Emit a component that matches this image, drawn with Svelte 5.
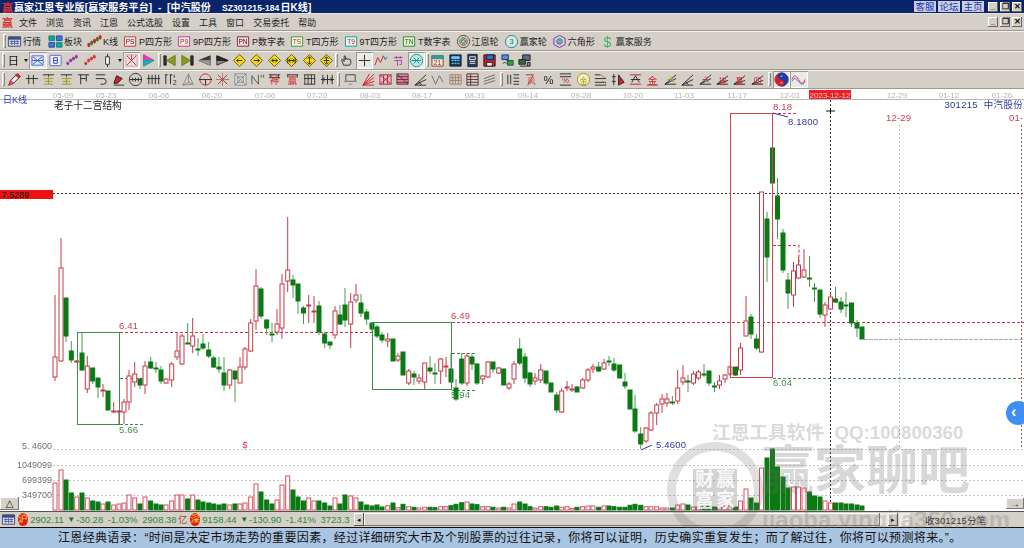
<script lang="ts">
	// x, high, body top, body bottom, low, 1 = green, volume top
	const candles = [
		[55,295,357,377,381,0,483],[61,238,268,361,362,0,470],[66,298,298,336,342,1,480],[71.3,341,351,360,363,1,493],
		[76.7,360,361,362,363,0,497],[82,333,353,370,371,1,493],[87.3,356,366,389,393,0,498],[92.7,368,368,381,384,1,501],
		[98,378,378,387,398,1,502],[103,384,390,391,397,0,504],[108,391,391,410,410,1,502],[113.7,402,411,412,413,0,505],
		[119,410,411,412,425,0,504],[124,399,402,412,424,0,503],[129,370,376,402,410,0,495],[134.7,362,374,382,387,0,498],
		[140,379,379,385,389,1,504],[145,361,366,385,394,0,497],[150.7,357,362,368,369,1,501],[156,362,368,369,373,1,504],
		[161,366,370,381,384,1,505],[166,378,379,383,384,0,505],[171.7,362,364,380,387,0,501],[177,332,351,357,360,0,495],
		[182,334,336,364,365,0,495],[187.7,323,343,344,344,1,499],[192.7,318,336,346,353,0,495],[198,338,349,350,356,1,500],
		[203,334,344,348,350,1,502],[208.7,342,350,356,358,1,503],[213.7,356,358,367,368,1,504],[219,357,367,369,373,1,505],
		[224,357,373,385,391,1,504],[229.7,369,370,385,389,0,505],[235,371,371,379,402,1,504],[240,357,367,383,383,0,504],
		[245,347,349,367,370,0,503],[250.7,319,323,351,352,0,497],[256,269,286,321,330,0,484],[261,287,289,316,319,1,492],
		[266.7,319,320,328,335,1,500],[272,323,334,335,342,1,504],[277,309,324,332,335,0,500],[282,274,284,328,339,0,485],
		[287.7,217,270,281,292,0,476],[293,275,280,285,298,1,490],[298,284,284,301,314,1,497],[303.5,306,308,313,324,1,501],
		[308.7,295,305,306,323,0,498],[314,296,311,312,323,0,501],[319,301,306,332,335,1,501],[324.7,332,334,343,348,1,503],
		[330,342,342,345,349,1,506],[335,306,311,335,339,0,498],[340,305,315,324,325,1,504],[345,288,305,320,327,1,495],
		[350.7,293,302,324,348,0,496],[356,284,295,300,303,0,498],[361,294,303,313,317,1,502],[366.7,309,312,319,325,1,505],
		[372,323,323,329,333,1,506],[377,325,327,336,338,1,505],[382,332,335,340,343,1,507],[387.7,333,339,341,347,0,505.7],
		[393,339,339,361,361,1,503],[398,353,356,360,362,0,507.7],[403,352,352,375,375,1,504.3],[408.7,369,371,383,385,0,506.7],
		[414,371,374,377,385,1,507.3],[419,374,378,381,384,0,508],[424.7,363,363,382,389,0,507.3],[430,356,368,371,374,1,507.3],
		[435,363,373,374,384,1,507.7],[440.7,358,359,371,384,0,506.7],[446,357,366,367,377,0,506.7],[451,353,369,382,382,1,505.7],
		[456,379,388,399,401,1,504.3],[461.7,353,359,383,385,1,502.7],[467,353,356,383,386,0,502],[472,353,357,364,370,1,504],
		[477,363,364,383,385,1,504.7],[482.7,375,376,379,384,0,506.7],[488,361,362,377,378,0,506.7],[493,362,362,369,373,1,507.3],
		[498.7,367,368,373,374,0,508],[503.7,369,369,385,385,1,507.3],[509,382,384,388,390,0,508],[514,361,364,379,384,0,504],
		[519.7,338,349,363,365,1,502],[525,353,357,378,383,1,504],[530,372,373,384,387,1,506.7],[535,373,378,381,385,0,508],
		[540.7,364,370,380,383,0,506.7],[546,371,371,383,385,1,506.7],[551,383,383,392,392,1,507.3],[556.7,392,395,410,413,1,506],
		[561.7,388,391,412,413,0,507.3],[567,381,387,388,391,0,506.7],[572,384,389,390,392,0,508.3],[577,386,387,392,392,1,507.3],
		[582.7,378,380,388,389,0,506.7],[588,368,370,380,382,0,506],[593,364,367,369,373,0,506],[598.7,362,367,371,372,1,507.3],
		[604,359,363,369,370,0,506],[609,356,361,362,366,1,506],[614,358,364,370,372,1,506.7],[619.7,365,365,378,378,1,507.3],
		[625,373,382,386,389,1,507.3],[630,390,390,409,409,1,505.3],[635,395,409,431,433,1,504.3],[640.7,427,434,444,449,1,505.3],
		[646,427,428,441,443,0,506.7],[651,411,413,430,431,0,506.7],[656.7,403,405,413,425,0,506.7],[662,394,399,404,413,0,508],
		[667,393,399,403,407,0,508],[672.4,396,402,403,405,1,508],[677.7,370,388,401,404,0,505],[683,365,378,382,385,0,504],
		[688,375,381,382,392,1,505],[693.5,371,374,383,385,0,507],[698.5,370,372,378,380,0,507],[704,364,374,375,377,1,506],
		[709,371,371,383,386,1,506],[714.5,382,386,387,392,1,507],[719.5,375,381,385,389,0,507],[725,374,375,379,383,0,506],
		[730,365,367,374,376,0,506],[735.5,367,367,375,376,1,507],[740.5,343,348,370,375,0,501],[746,296,321,336,336,0,489],
		[751,314,317,334,339,1,498],[756.5,334,339,348,350,1,503],[761.5,192,192,352,353,0,468],[767,212,219,257,282,1,458],
		[772.5,113,148,183,253,1,449],[777.5,178,196,219,239,1,467],[783,229,233,270,273,1,477],[788,273,280,293,309,1,488],
		[793.5,262,271,295,307,0,487],[798.5,257,265,278,279,0,487],[804,249,270,277,278,0,488],[809.5,256,278,279,287,1,492],
		[814.5,283,288,289,302,1,496],[820,290,290,314,318,1,497],[825,302,305,315,327,0,501],[830.5,293,297,309,310,0,503],
		[835.5,287,299,302,303,1,503],[841,297,302,309,313,1,503],[846,292,305,306,317,1,504],[851.5,303,303,323,327,1,504],
		[857,320,323,328,337,1,505],[862,327,327,339,339,1,506]
	];

	const dates = [
		[63,'05-09'],[106,'05-23'],[159,'06-06'],[212,'06-20'],[265,'07-06'],[317,'07-20'],[370,'08-03'],[422,'08-17'],[475,'08-31'],
		[528,'09-14'],[581,'09-28'],[633,'10-20'],[684,'11-03'],[737,'11-17'],[790,'12-01'],[897,'12-29'],[949,'01-12'],[1002,'01-26']
	];

	const menus = ['文件', '浏览', '资讯', '江恩', '公式选股', '设置', '工具', '窗口', '交易委托', '帮助'];

	const K = '#2b2b2b', R = '#d3202a', A = '#a5951c', B = '#3456b8', T = '#14958a', M = '#b52aa8', S = '#8a8a8a', O = '#6f7a16';

	const lines = (d, c = K) => [[d, c]];
	const candleMark = (c) => [['M3 13v-3M6 10V6M9 8V4M12 6V2', c], ['M2 10h2v2H2zM5 7h2v2H5zM8 5h2v2H8zM11 3h2v2h-2z', c, c]];
	const gold = [['M2 3h12M8 3v2', K], ['M3 7h10M8 5v8M4 10h8M3 13h10', A]];
	const fan = (c) => [['M2 13L14 3M2 13L14 7M2 13h12', K], ['M8 5l3 6M5 8h5', c]];
	const diamond = (d) => [['M8 1.5L14.5 8 8 14.5 1.5 8z', '#6b5a00', '#f2d816'], [d, K]];
	const tag = (t, c, bg, tc) => [['M1.5 3h12v10h-12z', c, bg], { t, x: 7.5, y: 11, c: tc, s: 7 }];
	const glyph = (t, c, s = 11) => ({ t, x: 8, y: 12.5, c, s });

	const icons = {
		quote: [['M1.5 3h13v10h-13z', '#3a4a80', '#dfe4ee'], ['M2 3.5h12v2H2z', '#3a4a80', '#3a4a80'], ['M3 8h10M3 10h10M5 6v6M8 6v6M11 6v6', '#5a6a9a']],
		blocks: [['M1 2h6v5H1zM9 9h6v5H9z', '#128a80', '#18a090'], ['M9 2h6v5H9zM1 9h6v5H1z', '#1c4fa8', '#3a78d0']],
		kline: [['M2 14v-4M5 12V7M8 10V5M11 8V3M14 6V1', R], ['M1 10h2v3H1zM7 6h2v3H7zM13 2h2v3h-2z', R, R], ['M4 8h2v3H4zM10 4h2v3h-2z', '#1a8a20', '#1a8a20']],
		ps: tag('PS', '#c83a3a', '#f4e4e4', '#602030'),
		p9: tag('P9', '#c030c0', '#f6f0c0', '#703070'),
		pn: tag('PN', '#902030', '#f0dcdc', '#401018'),
		ts: tag('TS', '#2a9a3a', '#eef6e4', '#d02030'),
		t9: tag('T9', '#189a90', '#e8f4f0', '#c82030'),
		tn: tag('TN', '#2a8a2a', '#e6f2d0', '#1a5a1a'),
		wheel: [['M8 1.5a6.5 6.5 0 1 0 .01 0z', '#8a2a3a'], ['M8 4a4 4 0 1 0 .01 0z', '#2a7a5a', '#b8d0b0'], ['M8 6a2 2 0 1 0 .01 0z', '#6a3040']],
		wheel2: [['M8 1.5a6.5 6.5 0 1 0 .01 0z', '#2a7a9a', '#d0e8e0'], { t: '3', x: 8, y: 11, c: '#1a7a50', s: 8 }],
		hex: [['M8 1.5l6 3.2v6.6l-6 3.2-6-3.2V4.700z', '#8030b0', '#d8c8f0'], ['M8 5a3 3 0 1 0 .01 0z', '#3a8a5a', '#70b090']],
		dollar: [{ t: '$', x: 8, y: 13.5, c: '#48b060', s: 15 }],
		day: [{ t: '日', x: 8, y: 12.5, c: '#111', s: 12 }],
		xbox: [['M2 3h12v10H2z', '#4a6ac8', '#e0e8fa'], ['M3 4l10 8M13 4L3 12M2 8h12', '#3a5ac0']],
		dbox: [['M3 2.500h10a1 1 0 0 1 1 1v9a1 1 0 0 1-1 1H3a1 1 0 0 1-1-1v-9a1 1 0 0 1 1-1z', '#5a6ad0', '#eef0ff'], ['M6 5h4v6H6zM6 8h4', '#3a4ab0']],
		kp: candleMark('#a030b0'),
		kr: candleMark('#d0303a'),
		ud: [['M8 1v14', K], ['M6 4h4v8H6z', K, '#fff']],
		kx: [['M2 2h12v12H2z', '#c8a0a0', '#f4dcdc'], ['M3 3l10 10M13 3L3 13M8 2v5', '#c8303a']],
		flag: [['M3 2v12', '#4a4a4a'], ['M3 2l11 6-11 0z', '#d02ab0', '#e040c0'], ['M3 8h11l-11 6z', '#18a0a0', '#20b0b0']],
		first: [['M2 3h2.500v10H2z', K, K], ['M14 2.500v11L5 8z', O, '#8a9a20']],
		last: [['M11.500 3H14v10h-2.500z', K, K], ['M2 2.500v11L11 8z', O, '#8a9a20']],
		prev: [['M14 3v10L2 8z', '#333', '#3c3c3c'], ['M14 8v5L2 8z', '#8a8a8a', '#9a9a9a']],
		next: [['M2 3v10l12-5z', '#333', '#8a8a8a'], ['M2 3v5h12z', '#222', '#2a2a2a']],
		d1: diamond('M5 8h6M7 6L5 8l2 2'),
		d2: diamond('M5 8h6M9 6l2 2-2 2'),
		d3: diamond('M5 8h6M7 6L5 8l2 2M9 6l2 2-2 2'),
		d4: diamond('M4 5v6M12 5v6M5 8h6M7 6L5 8l2 2M9 6l2 2-2 2'),
		d5: diamond('M8 4v8M6 6l2-2 2 2M6 10l2 2 2-2'),
		d6: diamond('M5 8h6M8 5v6M6 6l2-2 2 2M6 10l2 2 2-2'),
		hand: lines('M5 13L3 8c-.5-1.500 1-2 1.500-.5L5.500 9V4c0-1.500 1.500-1.500 1.500 0v3c0-1.500 2-1.500 2 0 0-1 1.800-1 1.800 0 0-.7 1.700-.7 1.700.5V11l-1 2z', '#333'),
		cross: lines('M8 2v12M2 8h12', '#222'),
		zig: [['M1 13l3-8 3 5 3-7', R], ['M10 3l2 4 2-3', B]],
		jie: [glyph('节', M)],
		tcirc: [['M8 1.500a6.500 6.500 0 1 0 .01 0z', T, '#bfe6e0'], ['M5 5l6 6M11 5l-6 6M3 8h10', T]],
		cal: [['M2 3h12v11H2z', '#705030', '#f0e4d0'], ['M2 3h12v3H2z', '#2a8a8a', '#30a0a0'], { t: '21', x: 8, y: 13, c: '#c02030', s: 7 }],
		calc: [['M2 2h12v12H2z', '#123', '#1a3a5a'], ['M4 4h8v2H4z', '#6cf', '#6cf'], ['M4 8h2M7 8h2M10 8h2M4 11h2M7 11h2M10 11h2', '#8ee']],
		note: [['M3 1.500h10v13H3z', '#1a2a3a', '#2a3a5a'], ['M5 4h6v3H5zM5 9h6M5 11h6', '#e8e8e8']],
		disk: [['M2 2h12v12H2z', '#301010', '#c82030'], ['M5 2h7v5H5z', '#123', '#1a7fd0'], ['M5 10h6v4H5z', '#222', '#eee']],
		pcs: [['M2 2h7v5H2z', '#1a3a7a', '#5a8ad0'], ['M8 8h6v5H8z', '#1a5a2a', '#3a9a4a'], ['M3 11a3 3 0 0 1 4 0', '#333'], ['M6 7l3 2', '#333']],
		pc: [['M6 2h8v6H6z', '#222', '#5a6a8a'], ['M2 7h7v5H2z', '#224', '#3a6a2a'], ['M3 14h8', '#222'], ['M11 10h3v4h-3z', '#222', '#888']],
		pencil: [['M3 14l2-5 7-7 3 3-7 7z', '#222', '#eee'], ['M10 3l3 3 2-1-2-3z', R, R], ['M3 14l2-5 3 3z', R, '#e66']],
		hash: lines('M5 3v10M10 3v10M2 7h13'),
		gold,
		ff: lines('M2 3h12M5 3v10M11 3v7M5 7h6'),
		ss: lines('M3 3h10M3 7h8a3 3 0 0 1 0 6H8'),
		pr: [['M3 14h11', K], ['M3 12l3-8 6 3-5 5z', '#222', R]],
		cbar: lines('M8 1.500a6.500 6.500 0 1 0 .01 0zM1.500 8h13M5 6v4M8 6v4M11 6v4'),
		h3: lines('M3 3v10M6.500 3v10M10 3v10M13.500 3v10M1 7h14'),
		n2: [['M2 3h3M7 3h3M3 3v10M8 3v10M12 3v3', K], { t: '2', x: 12.500, y: 14, c: K, s: 7 }],
		gp: lines('M3 14L9 2l5 11zM3 14l6-3 5 2M9 2v9', S),
		cr: [['M8 2a6 6 0 1 0 .01 0z', R], ['M1 8h14M8 8v6', K]],
		star: [['M8 1v14M1 8h14', '#9a8080'], ['M3 3l10 10M13 3L3 13', R]],
		sq: [['M2 2h12v12H2z', S, '#ddd'], ['M2 2l12 12M14 2L2 14M5 5h6v6H5z', S]],
		nn: lines('M2 13V4l7 9V3M12 3v3M14.500 3v3', '#555'),
		te: [['M2 3h12M2 6h12M4 3v3M12 3v3', K], glyph('神', R, 10)],
		tw: [['M2 3h12M3 3v3M13 3v3', K], glyph('赢', R, 10)],
		grid: lines('M2 3h12M2 7h12M3 3v10M6.500 3v10M10 3v10M13.500 3v10M2 13h12', '#333'),
		hh: lines('M3 3v10M8 3v10M13 3v10M1 8h14M5 6l-2 2 2 2M11 6l2 2-2 2'),
		box: [['M3 3h10v7H3z', '#444'], ['M1 10h14M6 13h4', S]],
		redfan: [['M2 14L14 2M2 14L14 6M2 14L14 10M2 14h12M2 14L9 2', R]],
		hatch: [['M2 3h12v10H2z', '#a03040', '#f0c0c8'], ['M2 13L14 3M2 3l12 10M6 3v10M10 3v10', '#b02040']],
		hatch2: [['M2 2h12v11H2z', '#703040', '#c8909a'], ['M2 5h12M2 8h12M2 11h12M2 2l12 11', '#802040']],
		fanK: lines('M2 14L14 3M2 14L14 8M2 14h12M6 10l3 4'),
		vv: lines('M2 4l4 9 4-9 4 7', '#707070'),
		grid2: lines('M2 3h12v10H2zM2 6h12M2 9h12M5 3v10M8 3v10M11 3v10', '#a08070'),
		grid3: lines('M2 2h12v12H2zM2 5h12M2 8h12M2 11h12M6 2v12', '#60303a'),
		para: lines('M2 7l12-4M2 10l12-4M2 13l12-4', '#6a6a6a'),
		ee: lines('M2 3v10M5 3v10M8 3h6M8 6.500h6M8 10h6M8 13h6'),
		rr: [['M2 3h8L4 14', '#c02a2a'], glyph('风', '#d04040', 9)],
		pct: [{ t: '%', x: 8, y: 12.500, c: '#222', s: 12 }],
		lp: [['M2 2h12M2 14h12M2 5h12', K], { t: '%', x: 8, y: 12, c: R, s: 8 }],
		coin: [['M8 1.500a6.500 6.500 0 1 0 .01 0z', A, '#f4ecc0'], glyph('金', A, 8)],
		lg: [['M2 3h6M2 7h12M2 11h12M2 14h12', K], ['M8 3l5 3M10 9l4 4', A]],
		kr2: [['M3 2v12M1 5h4M1 10h4', K], ['M8 3l6 8-6 3z', K, R]],
		rl: [['M2 3h12M2 13h12', R], ['M4 11L8 4l4 7M3 8h10', K]],
		rg: [['M2 14h12', R], glyph('金', R, 10)],
		f1: fan(A),
		f2: fan(R),
		f3: [['M2 13L14 4M2 13L14 9M2 13h12', K], glyph('神', R, 8)],
		f4: [['M2 13L14 4M2 13L14 9M2 13h12', K], glyph('赢', R, 8)],
		f5: [['M2 13L14 4M2 13L14 9M2 13h12', K], glyph('四', R, 8)],
		taiji: [['M8 1a7 7 0 1 0 .01 0z', '#c82030', R], ['M8 1a3.500 3.500 0 0 0 0 7 3.500 3.500 0 0 1 0 7 7 7 0 0 0 0-14z', '#1c3ea8', '#1c3ea8'], ['M7.200 4.500h1.600M7.200 11.500h1.600', '#fff']],
		wave: [['M1 8c2-5 4-5 7 0s5 5 7 0', '#e03040'], ['M1 10c2-4 4-4 7 0s5 4 7 0', '#3a6ad0']]
	};

	const row1 = [
		['quote', '行情'], ['blocks', '板块'], ['kline', 'K线'], ['ps', 'P四方形'], ['p9', '9P四方形'], ['pn', 'P数字表'], ['ts', 'T四方形'],
		['t9', '9T四方形'], ['tn', 'T数字表'], ['wheel', '江恩轮'], ['wheel2', '赢家轮'], ['hex', '六角形'], ['dollar', '赢家服务']
	];

	// "|" is a group break, "v" the small drop arrow, "*name" a pressed button
	const row2 = ['day', 'v', '*xbox', 'dbox', 'kp', 'kr', 'ud', 'v', '*kx', 'flag', '|a', 'first', 'last', 'prev', 'next', 'd1', 'd2', 'd3', 'd4', 'd5', 'd6', '|b',
		'hand', '*cross', 'zig', 'jie', '*tcirc', '|c', 'cal', 'calc', 'note', 'disk', 'pcs', 'pc'];
	const row3 = ['pencil', 'hash', 'gold', 'gold', 'ff', 'ss', 'pr', 'cbar', 'h3', 'n2', 'gp', 'cr', 'star', 'sq', 'nn', 'te', 'tw', 'grid', 'hh', '|d',
		'box', 'redfan', 'hatch', 'hatch2', 'fanK', 'vv', 'grid2', 'grid3', 'para', '|d',
		'ee', 'rr', 'pct', 'lp', 'coin', 'lg', 'kr2', 'rl', 'rg', 'f1', 'fanK', 'f2', 'f3', 'f4', 'f5', '|e', '*taiji', '*wave'];
</script>

{#snippet icon(name: string)}
	<svg class="ico" viewBox="0 0 16 16" aria-hidden="true">
		{#each icons[name] as p}
			{#if Array.isArray(p)}
				<path d={p[0]} stroke={p[1]} fill={p[2] || 'none'} />
			{:else}
				<text x={p.x} y={p.y} fill={p.c} font-size={p.s} text-anchor="middle">{p.t}</text>
			{/if}
		{/each}
	</svg>
{/snippet}

{#snippet toolbar(items: string[])}
	<div class="bar tools">
		<i class="grip"></i>
		{#each items as it}
			{#if it === 'v'}
				<span class="drop"></span>
			{:else if it[0] === '|'}
				<span class="gap gap-{it[1]}"><i class="grip"></i></span>
			{:else}
				<span class="tool" class:on={it[0] === '*'}>
					{@render icon(it.replace('*', ''))}
				</span>
			{/if}
		{/each}
	</div>
{/snippet}

<div class="app">
	<header class="title">
		<span class="logo">赢</span>
		<span class="cap">赢家江恩专业版[赢家服务平台]  -  [中汽股份<b>SZ301215-184</b>日K线]</span>
		<span class="links"><a>客服</a><a>论坛</a><a>主页</a></span>
		<span class="win"><i>_</i><i>❐</i><i>✕</i></span>
	</header>

	<nav class="bar menu">
		<span class="logo red">赢</span>
		{#each menus as m}<span>{m}</span>{/each}
		<span class="win"><i>_</i><i>❐</i><i>✕</i></span>
	</nav>

	<div class="bar labels">
		<i class="grip"></i>
		{#each row1 as [ic, label]}
			<span class="lab">{@render icon(ic)}{label}</span>
		{/each}
	</div>

	{@render toolbar(row2)}
	{@render toolbar(row3)}

	<main class="main">
		<svg class="chart" viewBox="0 89 1024 422" font-family="'Liberation Sans','Noto Sans CJK SC',sans-serif">
			<rect x="0" y="89" width="1024" height="422" fill="#fff" />
			<line x1="0" x2="1024" y1="99.500" y2="99.500" stroke="#b8b8b8" />
			{#each dates as [x, d]}
				<text {x} y="98" font-size="8" fill="#b4b4b4" text-anchor="middle">{d}</text>
			{/each}
			<rect x="809" y="90" width="42" height="9" fill="#ee1c25" />
			<text x="830" y="98" font-size="8" fill="#f8caca" text-anchor="middle">2023-12-12</text>

			<text x="3" y="103" font-size="9" fill="#2a3ab0">日K线</text>
			<text x="54" y="109" font-size="9.700" fill="#222">老子十二宫结构</text>
			<text x="1023" y="108" font-size="9.500" fill="#2a3a9a" text-anchor="end" letter-spacing=".3">301215&nbsp; 中汽股份</text>

			<!-- grid and level lines -->
			<g stroke-dasharray="2 2" fill="none">
				<path d="M53 193.500H1024" stroke="#333" />
				<path d="M53 449.500H1024M53 465.500H1024M53 480.500H1024M53 495.500H1024" stroke="#c4c4c4" />
				<path d="M830.500 100V510" stroke="#333" />
				<path d="M899.500 125V449" stroke="#9ccbd0" />
				<path d="M1021.500 125V449" stroke="#c84050" />
				<path d="M120 332.500H372M452 322.500H1024M773 113.500H798M773 245.500H799V265" stroke="#cc3344" stroke-dasharray="3 2" />
				<path d="M120 378.500H144M120 424.500H144M452 353.500H477M452 390.500H477M773 378.500H1024" stroke="#3f8f48" stroke-dasharray="3 2" />
				<path d="M864 339.500H1024" stroke="#aaa" stroke-dasharray="4 1" />
			</g>
			<path d="M826 111h9M830.500 108v6" stroke="#111" />

			<!-- candles -->
			{#each candles as [x, hi, top, bot, lo, green]}
				<line x1={x} x2={x} y1={hi} y2={lo} stroke={green ? '#4c9a52' : '#c83a4a'} />
				<rect x={x - 2} y={top} width="4" height={Math.max(bot - top, 1)}
					fill={green ? '#0b7a14' : '#fff'} stroke={green ? '#0b7a14' : '#c83a4a'} />
			{/each}

			<!-- pattern boxes -->
			<g fill="none">
				<rect x="77.500" y="332.500" width="42" height="92" stroke="#3f8f48" />
				<rect x="372.500" y="322.500" width="79" height="67" stroke="#3f8f48" />
				<rect x="730.500" y="113.500" width="42" height="264" stroke="#d84050" />
				<path d="M773 113l15 4M641 450l11-5" stroke="#3434b0" />
			</g>

			<!-- volume -->
			{#each candles as [x, , , , , green, v]}
				<rect x={x - 2} y={v} width="4" height={510 - v}
					fill={green ? '#0b7a14' : '#fff'} stroke={green ? '#0b7a14' : '#d85060'} />
			{/each}

			<g font-size="9.500" letter-spacing=".2">
				<text x="119" y="329" fill="#c84050">6.41</text>
				<text x="119" y="433" fill="#3f8f48">5.66</text>
				<text x="451" y="319" fill="#c84050">6.49</text>
				<text x="451" y="398" fill="#3f8f48">5.94</text>
				<text x="773" y="110" fill="#c84050">8.18</text>
				<text x="788" y="125" fill="#3434a0">8.1800</text>
				<text x="773" y="386" fill="#3f8f48">6.04</text>
				<text x="656" y="448" fill="#3434a0">5.4600</text>
				<text x="886" y="121" fill="#c84050">12-29</text>
				<text x="1009" y="121" fill="#c84050">01-</text>
				<text x="245" y="448" fill="#c84050" text-anchor="middle">$</text>
			</g>

			<g font-size="9" fill="#707070" text-anchor="end">
				<text x="52" y="449">5. 4600</text>
				<text x="52" y="468">1049099</text>
				<text x="52" y="483">699399</text>
				<text x="52" y="498">349700</text>
			</g>

			<rect x="0" y="190" width="53" height="9" fill="#ee1111" />
			<text x="2" y="198" font-size="9" fill="#111">7.5289</text>
		</svg>

		<button class="tri">△</button>
		<button class="arrow">→</button>
		<span class="fold">‹</span>

		<footer class="status">
			{@render icon('quote')}
			<b class="coin">沪</b>
			<span class="fig">2902.11</span><em>▼</em><span class="fig">-30.28</span><span class="fig">-1.03%</span><span class="fig">2908.38</span><span class="yi">亿</span>
			<b class="coin">深</b>
			<span class="fig">9158.44</span><em>▼</em><span class="fig">-130.90</span><span class="fig">-1.41%</span><span class="fig">3723.3</span>
			<div class="scroll">
				<button>◂</button><span class="thumb"></span><i class="rest"></i><button>▸</button>
			</div>
			<span class="tail">收301215分笔</span>
		</footer>

		<!-- watermark sits over chart and status bar -->
		<div class="mark" aria-hidden="true">
			<p class="qq">江恩工具软件&nbsp; QQ:100800360</p>
			<p class="brand">赢家聊吧</p>
			<p class="site">jiaoba.yingjia360.com</p>
			<div class="seal"><span>财赢</span><span>富家</span></div>
		</div>
	</main>

	<div class="quote">江恩经典语录：“时间是决定市场走势的重要因素，经过详细研究大市及个别股票的过往记录，你将可以证明，历史确实重复发生；而了解过往，你将可以预测将来。”。</div>
</div>

<style>
	:global(body) {
		margin: 0;
		background: #d4d0c8;
	}

	.app {
		width: 1024px;
		height: 548px;
		display: flex;
		flex-direction: column;
		overflow: hidden;
		font-family: 'Liberation Sans', 'Noto Sans CJK SC', sans-serif;
		font-size: 9px;
		color: #222;
		background: #d4d0c8;
	}

	.title {
		height: 14px;
		flex: none;
		display: flex;
		align-items: center;
		padding-left: 2px;
		background: #0a246a;
		color: #fff;
		font-size: 10px;
		border-bottom: 1px solid #e6e3dc;
		box-sizing: border-box;
	}

	.logo {
		width: 12px;
		font-size: 11px;
		font-weight: 700;
		color: #e03030;
	}

	.cap {
		font-weight: 700;
		white-space: pre;
		letter-spacing: .1px;
	}

	.cap b {
		margin: 0 1px 0 11px;
		font-size: 8.500px;
		letter-spacing: .1px;
	}

	.links {
		margin-left: auto;
		display: flex;
		gap: 2px;
	}

	.links a {
		width: 22px;
		height: 11px;
		line-height: 11px;
		text-align: center;
		background: #c9cfdd;
		color: #2430c0;
		font-size: 9.500px;
	}

	.win {
		display: flex;
		gap: 2px;
		margin: 0 2px 0 4px;
	}

	.win i {
		width: 10px;
		height: 10px;
		line-height: 10px;
		text-align: center;
		font-style: normal;
		font-size: 8px;
		font-weight: 700;
		color: #111;
		background: #d4d0c8;
		box-shadow: inset -1px -1px #666, inset 1px 1px #fff;
	}

	.bar {
		flex: none;
		display: flex;
		align-items: center;
		border-bottom: 1px solid #9c9a94;
		box-shadow: 0 1px #f4f2ee;
		box-sizing: border-box;
	}

	.menu {
		height: 17px;
		padding-left: 2px;
		gap: 9px;
		font-size: 9px;
	}

	.menu .logo {
		margin-right: -4px;
		width: 12px;
	}

	.menu .win {
		margin-left: auto;
	}

	.labels {
		height: 20px;
		padding-left: 3px;
		gap: 5px;
		padding-top: 1px;
	}

	.labels .grip {
		margin-right: -4px;
	}

	.labels .lab:first-of-type {
		margin-right: 2px;
	}

	.lab {
		display: flex;
		align-items: center;
		gap: 1px;
		white-space: nowrap;
	}

	.ico {
		width: 15px;
		height: 15px;
		flex: none;
		filter: blur(.2px);
	}

	.ico path {
		stroke-width: 1;
		stroke-linejoin: round;
	}

	.tools {
		height: 19px;
		padding-left: 2px;
	}

	.grip {
		display: block;
		width: 3px;
		height: 14px;
		flex: none;
		box-sizing: border-box;
		background: #d4d0c8;
		box-shadow: inset 1px 1px #fff, inset -1px -1px #8a8880;
	}

	.tools > .grip {
		margin-right: .3px;
	}

	.tool {
		width: 17.400px;
		height: 17px;
		flex: none;
		display: flex;
		align-items: center;
		justify-content: center;
	}

	.tool.on {
		background: #ebe9e4;
		box-shadow: inset 1px 1px #9a9890, inset -1px -1px #fff;
	}

	.drop {
		width: 6.600px;
		flex: none;
		display: flex;
		justify-content: center;
	}

	.drop::after {
		content: '';
		border: 2px solid transparent;
		border-top: 3px solid #111;
		border-bottom: 0;
	}

	.gap {
		flex: none;
		display: flex;
		justify-content: center;
	}

	.gap-a { width: 3.600px; }
	.gap-b { width: 3px; }
	.gap-c { width: 4px; }
	.gap-d { width: 6.400px; }
	.gap-e { width: 7px; }

	.main {
		position: relative;
		flex: 1;
		min-height: 0;
		display: flex;
		flex-direction: column;
		overflow: hidden;
	}

	.chart {
		display: block;
		width: 1024px;
		height: 422px;
		flex: none;
		filter: blur(.25px);
	}

	.tri,
	.arrow {
		position: absolute;
		padding: 0;
		border: 0;
		background: #d4d0c8;
		box-shadow: inset -1px -1px #777, inset 1px 1px #fff;
		font: 10px/12px 'Liberation Sans', 'DejaVu Sans', sans-serif;
		color: #222;
	}

	.tri {
		left: 0;
		top: 408px;
		width: 19px;
		height: 13px;
	}

	.arrow {
		right: 0;
		top: 409px;
		width: 18px;
		height: 11px;
	}

	.fold {
		position: absolute;
		left: 1006px;
		top: 312px;
		width: 24px;
		height: 24px;
		border-radius: 50%;
		background: #3d8ff2;
		color: #fff;
		font: 700 16px/21px 'Liberation Sans', sans-serif;
		padding-left: 5px;
		box-sizing: border-box;
	}

	.status {
		height: 17px;
		flex: none;
		display: flex;
		align-items: center;
		padding-left: 1px;
		box-sizing: border-box;
		border-top: 1px solid #555;
		border-bottom: 1px solid #111;
		font-size: 9.500px;
	}

	.coin {
		width: 13px;
		height: 13px;
		margin: 0 2px;
		border-radius: 50%;
		background: #e0220f;
		color: #ffe14a;
		text-align: center;
		font-size: 9px;
		line-height: 13px;
		font-weight: 400;
	}

	.fig {
		color: #2f8a3a;
		margin-right: 4.500px;
	}

	.status em {
		font-style: normal;
		font-size: 8px;
		color: #0a7a14;
		margin: 0 1px 0 -1px;
	}

	.yi {
		color: #a04030;
		margin: 0 1px 0 -3px;
		font-size: 9px;
	}

	.scroll {
		width: 556px;
		flex: none;
		margin-left: auto;
		height: 13px;
		display: flex;
		background: #ece9e2;
	}

	.scroll button {
		width: 10px;
		padding: 0;
		border: 0;
		background: #d4d0c8;
		box-shadow: inset -1px -1px #555, inset 1px 1px #fff;
		font-size: 7px;
		line-height: 12px;
		color: #111;
	}

	.thumb {
		width: 516px;
		background: #d4d0c8;
		box-shadow: inset -1px -1px #777, inset 1px 1px #fff;
	}

	.rest {
		width: 8px;
	}

	.tail {
		width: 114px;
		flex: none;
		padding-left: 15px;
		box-sizing: border-box;
		color: #333;
		font-size: 9.500px;
		letter-spacing: .1px;
		white-space: nowrap;
	}

	.mark {
		position: absolute;
		inset: 0;
		pointer-events: none;
		color: rgba(110, 110, 110, .27);
		font-weight: 700;
	}

	.mark p {
		position: absolute;
		margin: 0;
		white-space: nowrap;
	}

	.qq {
		left: 712px;
		top: 328px;
		font-size: 18.700px;
	}

	.brand {
		left: 762px;
		top: 351px;
		font-size: 52px;
		line-height: 62px;
	}

	.site {
		left: 762px;
		top: 416px;
		font-size: 24px;
		line-height: 30px;
	}

	.seal {
		position: absolute;
		left: 667px;
		top: 353px;
		width: 96px;
		height: 96px;
		box-sizing: border-box;
		border: 9px solid rgba(110, 110, 110, .22);
		border-radius: 50%;
		display: flex;
		flex-direction: column;
		align-items: center;
		justify-content: center;
		font-size: 19px;
		line-height: 21px;
		letter-spacing: 2px;
		color: rgba(255, 255, 255, .85);
	}

	.seal span {
		background: rgba(110, 110, 110, .3);
		padding-left: 2px;
	}

	.quote {
		height: 20px;
		flex: none;
		background: #a9c5e2;
		color: #111;
		font-size: 12px;
		line-height: 20px;
		padding-left: 58px;
		white-space: nowrap;
		letter-spacing: .34px;
	}
</style>
